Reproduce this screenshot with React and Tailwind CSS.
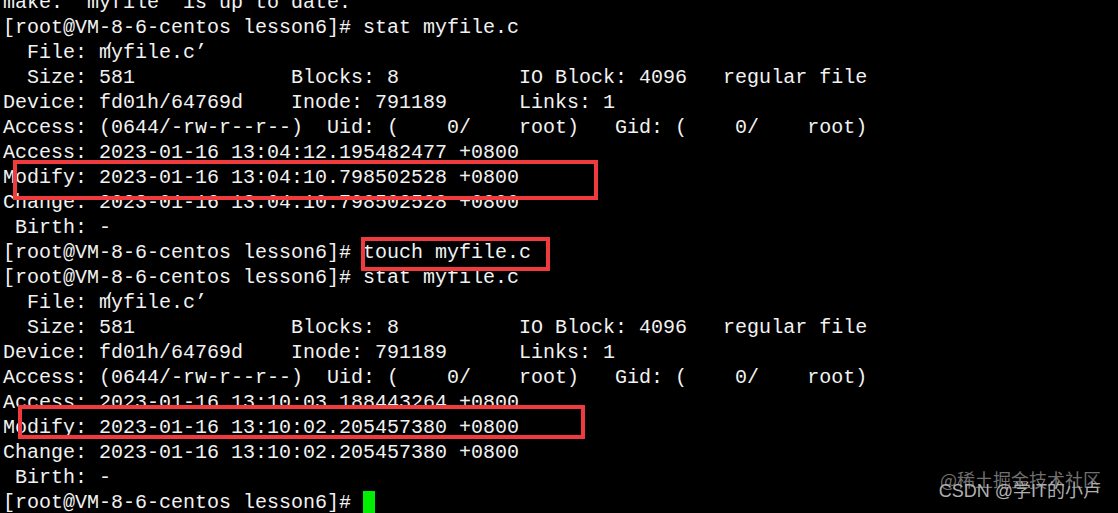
import React from "react";

const prompt = "[root@VM-8-6-centos lesson6]# ";

const statLines = (access, modify, change) => [
  "  File: ",
  "  Size: 581             Blocks: 8          IO Block: 4096   regular file",
  "Device: fd01h/64769d    Inode: 791189      Links: 1",
  "Access: (0644/-rw-r--r--)  Uid: (    0/    root)   Gid: (    0/    root)",
  "Access: " + access,
  "Modify: " + modify,
  "Change: " + change,
  " Birth: -",
];

const FileLine = () => (
  <div>
    {"  File: "}
    <span className="relative">
      m
      <span className="absolute left-[4px] -top-[2px]">‘</span>
    </span>
    {"yfile.c’"}
  </div>
);

const Line = ({ text }) => {
  if (text === "  File: ") return <FileLine />;
  return <div>{text === "" ? "\u00a0" : text}</div>;
};

export default function App() {
  const first = statLines(
    "2023-01-16 13:04:12.195482477 +0800",
    "2023-01-16 13:04:10.798502528 +0800",
    "2023-01-16 13:04:10.798502528 +0800"
  );
  const second = statLines(
    "2023-01-16 13:10:03.188443264 +0800",
    "2023-01-16 13:10:02.205457380 +0800",
    "2023-01-16 13:10:02.205457380 +0800"
  );

  const lines = [
    "make: `myfile' is up to date.",
    prompt + "stat myfile.c",
    ...first,
    prompt + "touch myfile.c",
    prompt + "stat myfile.c",
    ...second,
  ];

  return (
    <div className="relative w-[1118px] h-[513px] bg-black overflow-hidden">
      <div className="-mt-[10px] pl-[3px] text-[20px] leading-[25px] text-[#f2f2f2] whitespace-pre font-['Liberation_Mono',monospace]">
        {lines.map((t, i) => (
          <Line key={i} text={t} />
        ))}
        <div className="flex items-center">
          {prompt}
          <span className="inline-block w-[12px] h-[24px] bg-[#00ee00]" />
        </div>
      </div>

      {/* annotation boxes */}
      <div className="absolute left-[13px] top-[160px] w-[585px] h-[40px] border-[4px] border-[#ef3b3d]" />
      <div className="absolute left-[361px] top-[237px] w-[189px] h-[34px] border-[4px] border-[#ef3b3d]" />
      <div className="absolute left-[18px] top-[405px] w-[567px] h-[34px] border-[4px] border-[#ef3b3d]" />

      {/* watermarks */}
      <div className="absolute right-[17px] bottom-[12px] flex flex-col items-end">
        <div className="text-[18px] leading-[20px] text-[#707070] font-['Noto_Sans_CJK_SC',sans-serif]">
          @稀土掘金技术社区
        </div>
        <div className="-mt-[8px] text-[18px] leading-[20px] text-[#b0b0b0] font-['Liberation_Sans','Noto_Sans_CJK_SC',sans-serif]">
          CSDN @学IT的小卢
        </div>
      </div>
    </div>
  );
}
